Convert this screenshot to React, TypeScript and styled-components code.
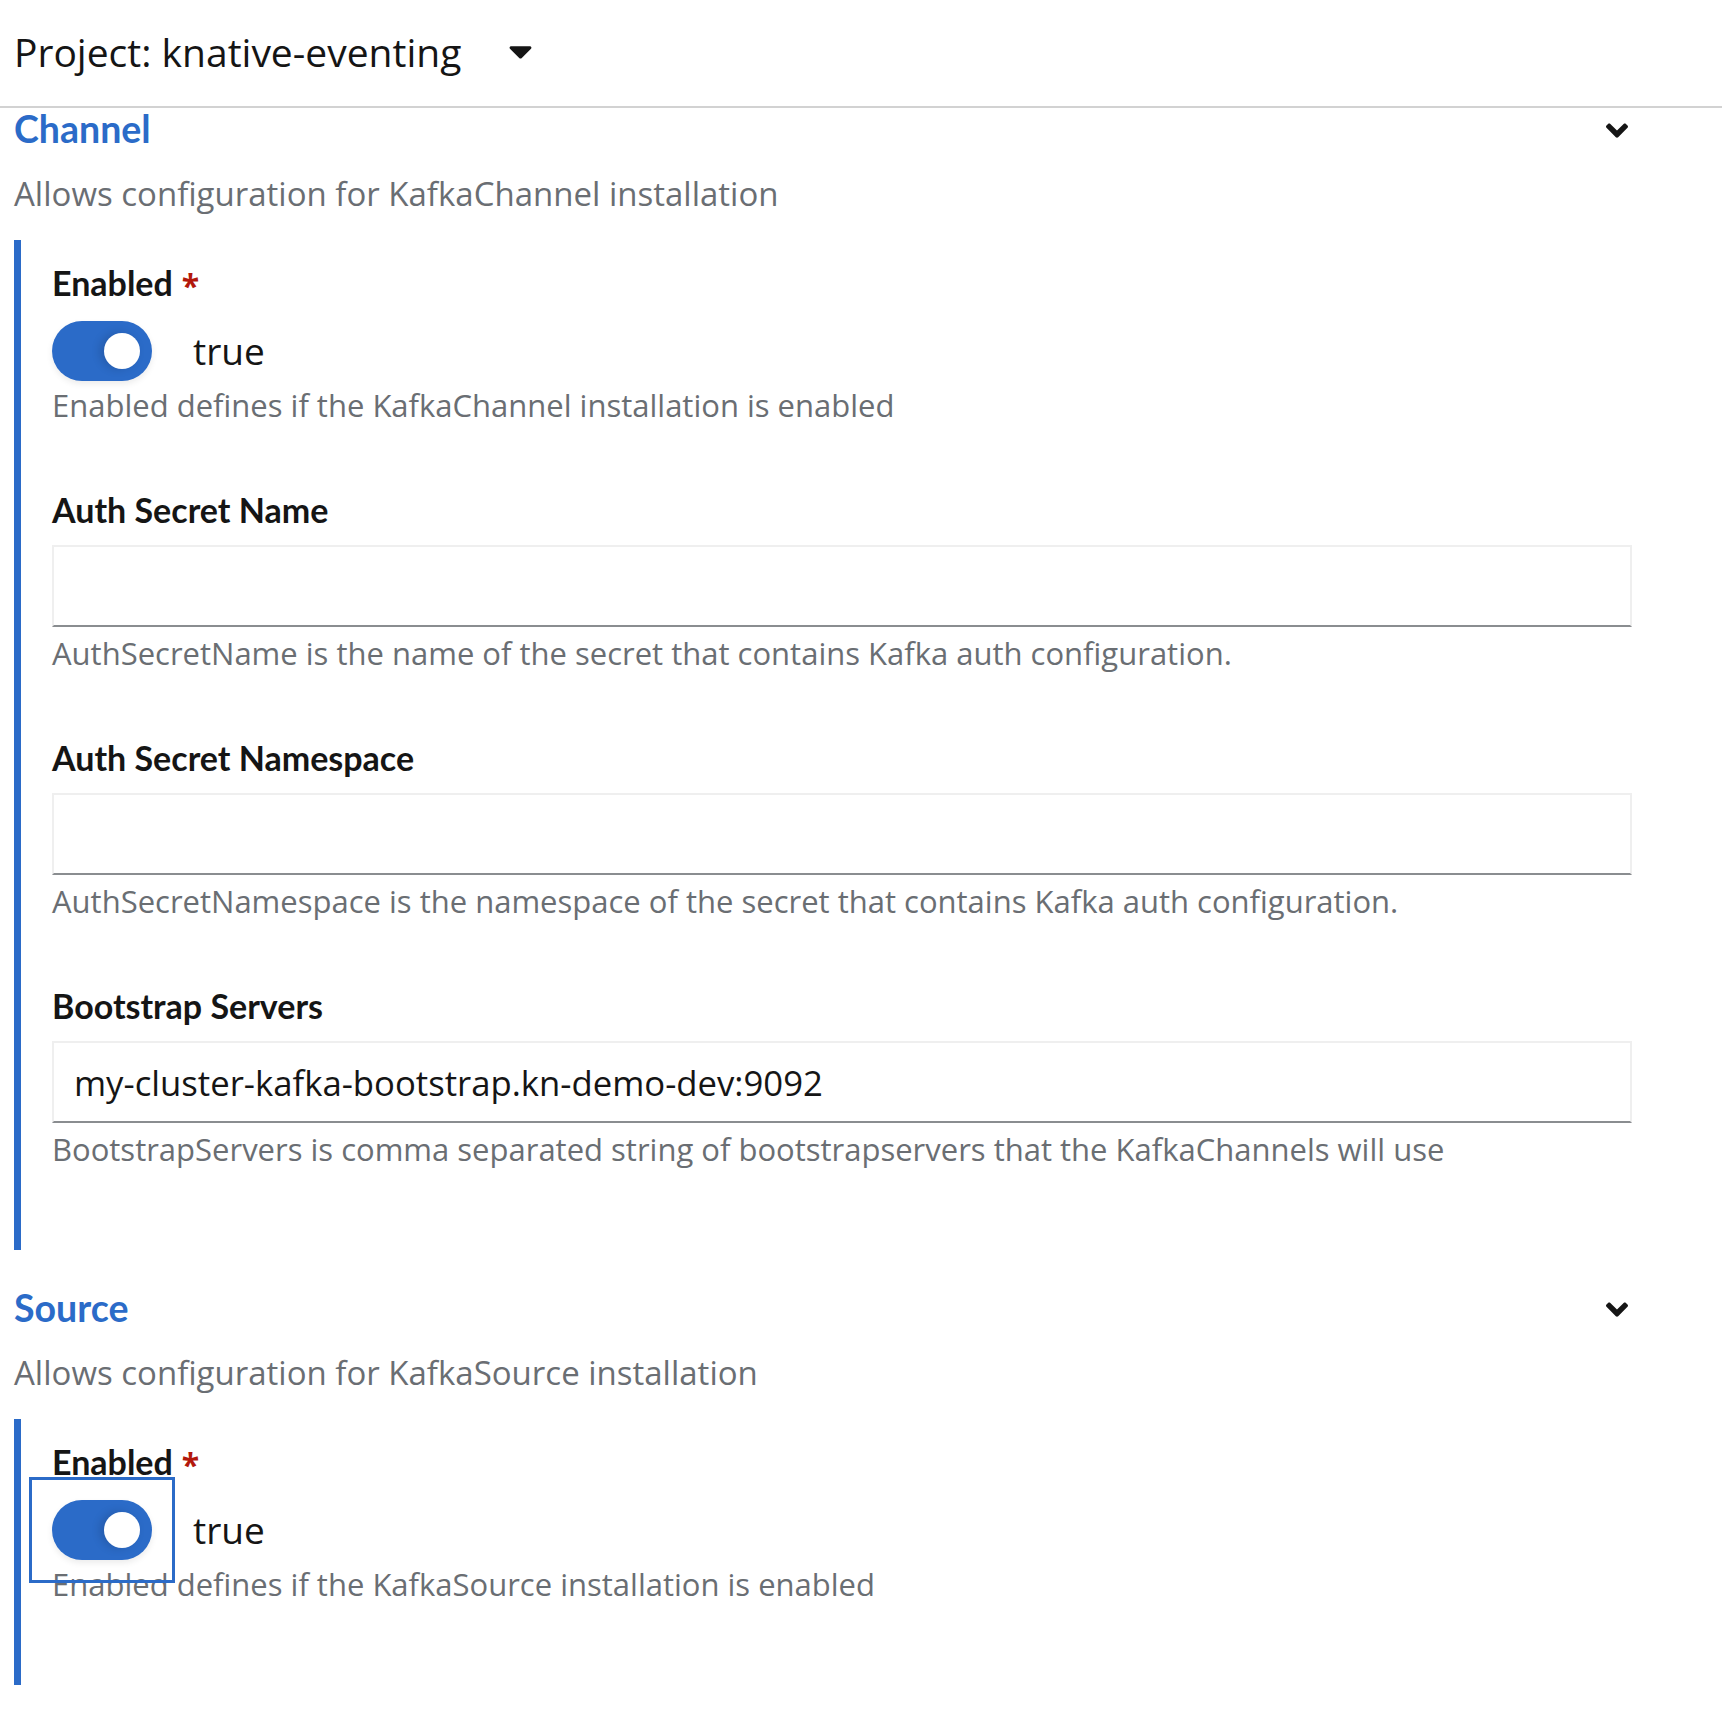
import React from "react";
import styled, { createGlobalStyle } from "styled-components";

const GlobalStyle = createGlobalStyle`
  html, body {
    margin: 0;
    padding: 0;
    background: #ffffff;
  }
  body {
    font-family: "Open Sans", "Liberation Sans", sans-serif;
    color: #151515;
  }
  * { box-sizing: border-box; }
`;

const Header = styled.header`
  height: 108px;
  display: flex;
  align-items: center;
  padding: 0 0 2px 14px;
  border-bottom: 2px solid #d2d2d2;
`;

const ProjectLabel = styled.span`
  font-size: 39px;
  line-height: 44px;
  color: #151515;
`;

const CaretWrap = styled.span`
  display: inline-flex;
  margin-left: 48px;
  color: #151515;
`;

const Page = styled.main`
  display: flex;
  flex-direction: column;
  gap: 37px;
  padding: 0 90px 36px 14px;
`;

const Section = styled.section`
  display: flex;
  flex-direction: column;
`;

const SectionHeader = styled.div`
  display: flex;
  align-items: center;
  justify-content: space-between;
  height: 44px;
`;

const SectionTitle = styled.h2`
  margin: 0;
  font-family: "Lato", "Open Sans", sans-serif;
  font-size: 37.5px;
  line-height: 42px;
  padding-bottom: 2px;
  font-weight: 700;
  color: #2b6bc8;
`;

const ChevronWrap = styled.span`
  display: inline-flex;
  margin-right: 4px;
  color: #151515;
`;

const SectionDescription = styled.p`
  margin: 20px 0 0;
  font-size: 33px;
  line-height: 44px;
  color: #6a6e73;
`;

const FieldGroup = styled.div`
  margin-top: 24px;
  border-left: 7px solid #2b6bc8;
  padding: 24px 0 81px 31px;
  display: flex;
  flex-direction: column;
  gap: 66px;
`;

const FormGroup = styled.div`
  display: flex;
  flex-direction: column;
`;

const Label = styled.label`
  font-family: "Lato", "Open Sans", sans-serif;
  font-size: 34px;
  line-height: 37px;
  padding-bottom: 3px;
  font-weight: 700;
  color: #151515;
`;

const Required = styled.span`
  font-family: "Open Sans", sans-serif;
  font-size: 32px;
  color: #b3180c;
  margin-left: 9px;
  position: relative;
  top: 2px;
`;

const SwitchRow = styled.div`
  margin-top: 16px;
  display: flex;
  align-items: center;
  gap: 41px;
  height: 60px;
`;

const Track = styled.span<{ $focused?: boolean }>`
  position: relative;
  width: 100px;
  height: 60px;
  border-radius: 30px;
  background: #2b6bc8;
  box-shadow: 0 3px 6px rgba(0, 0, 0, 0.08);
  flex: none;

  &::after {
    content: "";
    display: ${(p) => (p.$focused ? "block" : "none")};
    position: absolute;
    inset: -23px;
    border: 3px solid #2b6bc8;
  }
`;

const Knob = styled.span`
  position: absolute;
  top: 12px;
  right: 12px;
  width: 36px;
  height: 36px;
  border-radius: 50%;
  background: #ffffff;
  box-shadow: -4px 0 10px rgba(0, 0, 0, 0.15);
`;

const SwitchText = styled.span`
  font-size: 37px;
  line-height: 40px;
  color: #151515;
`;

const HelperText = styled.div<{ $tight?: boolean }>`
  margin-top: ${(p) => (p.$tight ? "4px" : "6px")};
  font-size: 31px;
  line-height: 40px;
  color: #6a6e73;
`;

const TextInput = styled.div`
  margin-top: 14px;
  height: 82px;
  display: flex;
  align-items: center;
  padding: 0 20px;
  border: 2px solid #efefef;
  border-bottom-color: #8a8d90;
  font-size: 34.7px;
  color: #151515;
`;

const Caret = () => (
  <svg width="23" height="13" viewBox="4 192 312 172" fill="currentColor" aria-hidden="true">
    <path d="M31.3 192h257.3c17.8 0 26.7 21.5 14.1 34.1L174.1 354.8c-7.8 7.8-20.5 7.8-28.3 0L17.2 226.1C4.6 213.5 13.5 192 31.3 192z" />
  </svg>
);

const Chevron = () => (
  <svg width="22" height="15" viewBox="0 152 320 207" fill="currentColor" aria-hidden="true">
    <path d="M143 352.3L7 216.3c-9.4-9.4-9.4-24.6 0-33.9l22.6-22.6c9.4-9.4 24.6-9.4 33.9 0l96.4 96.4 96.4-96.4c9.4-9.4 24.6-9.4 33.9 0l22.6 22.6c9.4 9.4 9.4 24.6 0 33.9l-136 136c-9.2 9.4-24.4 9.4-33.8 0z" />
  </svg>
);

type SwitchFieldProps = { help: string; focused?: boolean };

const SwitchField = ({ help, focused }: SwitchFieldProps) => (
  <FormGroup>
    <Label>
      Enabled<Required>*</Required>
    </Label>
    <SwitchRow>
      <Track $focused={focused}>
        <Knob />
      </Track>
      <SwitchText>true</SwitchText>
    </SwitchRow>
    <HelperText $tight>{help}</HelperText>
  </FormGroup>
);

type InputFieldProps = { label: string; value?: string; help: string };

const InputField = ({ label, value, help }: InputFieldProps) => (
  <FormGroup>
    <Label>{label}</Label>
    <TextInput>{value}</TextInput>
    <HelperText>{help}</HelperText>
  </FormGroup>
);

export default function App() {
  return (
    <>
      <GlobalStyle />
      <Header>
        <ProjectLabel>Project: knative-eventing</ProjectLabel>
        <CaretWrap>
          <Caret />
        </CaretWrap>
      </Header>
      <Page>
        <Section>
          <SectionHeader>
            <SectionTitle>Channel</SectionTitle>
            <ChevronWrap>
              <Chevron />
            </ChevronWrap>
          </SectionHeader>
          <SectionDescription>Allows configuration for KafkaChannel installation</SectionDescription>
          <FieldGroup>
            <SwitchField help="Enabled defines if the KafkaChannel installation is enabled" />
            <InputField
              label="Auth Secret Name"
              help="AuthSecretName is the name of the secret that contains Kafka auth configuration."
            />
            <InputField
              label="Auth Secret Namespace"
              help="AuthSecretNamespace is the namespace of the secret that contains Kafka auth configuration."
            />
            <InputField
              label="Bootstrap Servers"
              value="my-cluster-kafka-bootstrap.kn-demo-dev:9092"
              help="BootstrapServers is comma separated string of bootstrapservers that the KafkaChannels will use"
            />
          </FieldGroup>
        </Section>
        <Section>
          <SectionHeader>
            <SectionTitle>Source</SectionTitle>
            <ChevronWrap>
              <Chevron />
            </ChevronWrap>
          </SectionHeader>
          <SectionDescription>Allows configuration for KafkaSource installation</SectionDescription>
          <FieldGroup>
            <SwitchField focused help="Enabled defines if the KafkaSource installation is enabled" />
          </FieldGroup>
        </Section>
      </Page>
    </>
  );
}
